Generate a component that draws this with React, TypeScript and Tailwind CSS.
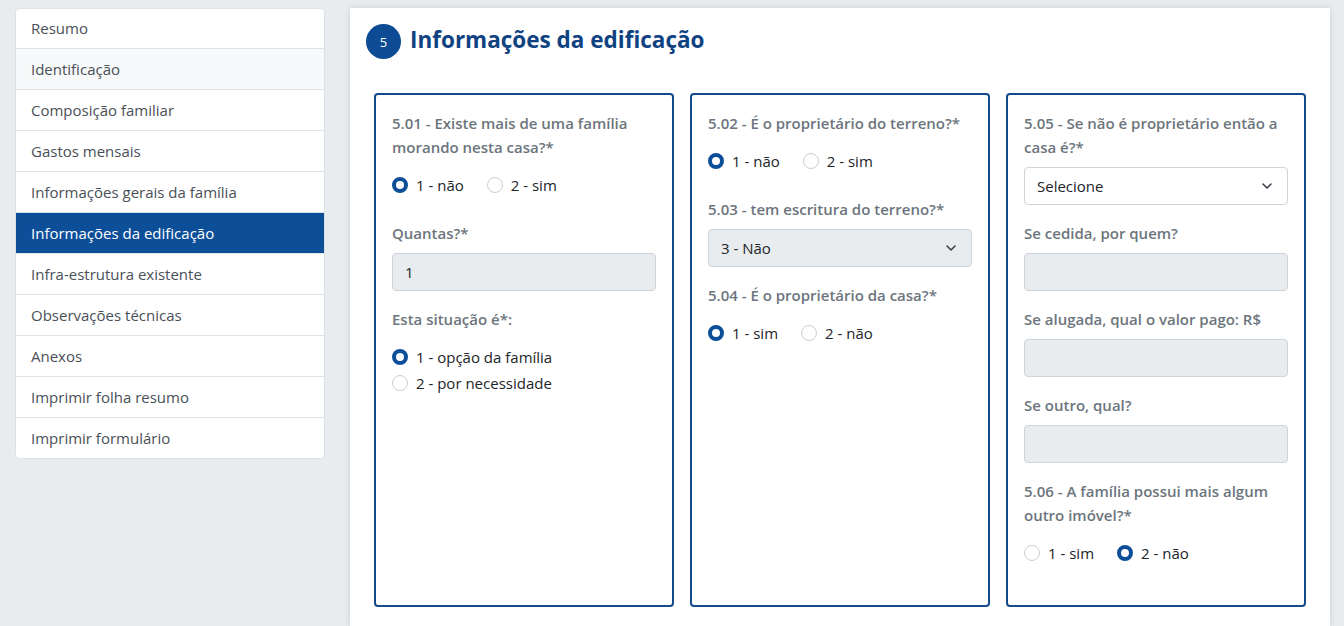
import { ChevronDown } from 'lucide-react';

const menu = [
  'Resumo',
  'Identificação',
  'Composição familiar',
  'Gastos mensais',
  'Informações gerais da família',
  'Informações da edificação',
  'Infra-estrutura existente',
  'Observações técnicas',
  'Anexos',
  'Imprimir folha resumo',
  'Imprimir formulário',
];

function Radio({ label, checked }: { label: string; checked?: boolean }) {
  return (
    <label className="mr-[23px] flex h-6 items-center">
      {checked ? (
        <span className="h-4 w-4 rounded-full border-[4.5px] border-[#0d4e99] bg-white" />
      ) : (
        <span className="h-4 w-4 rounded-full border border-[#c9cdd2] bg-white" />
      )}
      <span className="ml-2 text-[#212529]">{label}</span>
    </label>
  );
}

function Question({ children }: { children: React.ReactNode }) {
  return <div className="font-semibold text-[#6c757d]">{children}</div>;
}

function Field({ value, white }: { value?: string; white?: boolean }) {
  return (
    <div
      className={`mt-2 h-[38px] rounded border border-[#ced4da] px-3 leading-[36px] text-[#212529] ${
        white ? 'bg-white' : 'bg-[#e9ecef]'
      }`}
    >
      {value}
    </div>
  );
}

function Select({ value, white }: { value: string; white?: boolean }) {
  return (
    <div
      className={`mt-2 flex h-[38px] items-center justify-between rounded border border-[#ced4da] pl-3 pr-3 text-[#212529] ${
        white ? 'bg-white' : 'bg-[#e9ecef]'
      }`}
    >
      <span>{value}</span>
      <ChevronDown size={16} strokeWidth={2.2} className="text-[#343a40]" />
    </div>
  );
}

export default function App() {
  return (
    <div
      className="flex min-h-screen gap-[25px] bg-[#e9ecef] pl-[15px] pt-2 text-[15px] leading-6"
      style={{ fontFamily: '"Open Sans", "Noto Sans", sans-serif' }}
    >
      {/* Menu lateral */}
      <div className="h-fit w-[310px] shrink-0 overflow-hidden rounded border border-[#dee2e6] bg-white">
        {menu.map((item, i) => (
          <div
            key={item}
            className={`px-[15px] ${
              i > 0 ? 'h-[41px] border-t border-[#dee2e6] leading-[40px]' : 'h-[39px] leading-[39px]'
            } ${
              i === 5
                ? 'border-[#0d4e99] bg-[#0d4e99] text-white'
                : i === 1
                ? 'bg-[#f8f9fa] text-[#495057]'
                : 'text-[#495057]'
            }`}
          >
            {item}
          </div>
        ))}
      </div>

      {/* Conteúdo */}
      <div className="w-[980px] bg-white shadow-[0_0_6px_rgba(0,0,0,0.12)]">
        <div className="flex items-center px-4 pt-4">
          <div className="flex h-[35px] w-[35px] items-center justify-center rounded-full bg-[#0d4b94] text-[13px] text-white">
            5
          </div>
          <h1 className="-mt-[3px] ml-[9px] text-[22.5px] font-bold text-[#0f4281]">Informações da edificação</h1>
        </div>

        <div className="mt-[34px] grid grid-cols-3 gap-4 px-6">
          <div className="rounded border-2 border-[#134a8c] px-4 pt-4">
            <Question>5.01 - Existe mais de uma família morando nesta casa?*</Question>
            <div className="mb-6 mt-[14px] flex">
              <Radio label="1 - não" checked />
              <Radio label="2 - sim" />
            </div>
            <Question>Quantas?*</Question>
            <Field value="1" />
            <div className="mt-4">
              <Question>Esta situação é*:</Question>
            </div>
            <div className="mb-6 mt-[14px] flex flex-col gap-[2px]">
              <Radio label="1 - opção da família" checked />
              <Radio label="2 - por necessidade" />
            </div>
          </div>

          <div className="rounded border-2 border-[#134a8c] px-4 pt-4">
            <Question>5.02 - É o proprietário do terreno?*</Question>
            <div className="mb-6 mt-[14px] flex">
              <Radio label="1 - não" checked />
              <Radio label="2 - sim" />
            </div>
            <Question>5.03 - tem escritura do terreno?*</Question>
            <Select value="3 - Não" />
            <div className="mt-4">
              <Question>5.04 - É o proprietário da casa?*</Question>
            </div>
            <div className="mb-6 mt-[14px] flex">
              <Radio label="1 - sim" checked />
              <Radio label="2 - não" />
            </div>
          </div>

          <div className="rounded border-2 border-[#134a8c] px-4 pb-4 pt-4">
            <Question>5.05 - Se não é proprietário então a casa é?*</Question>
            <Select value="Selecione" white />
            <div className="mt-4">
              <Question>Se cedida, por quem?</Question>
            </div>
            <Field />
            <div className="mt-4">
              <Question>Se alugada, qual o valor pago: R$</Question>
            </div>
            <Field />
            <div className="mt-4">
              <Question>Se outro, qual?</Question>
            </div>
            <Field />
            <div className="mt-4">
              <Question>5.06 - A família possui mais algum outro imóvel?*</Question>
            </div>
            <div className="mb-6 mt-[14px] flex">
              <Radio label="1 - sim" />
              <Radio label="2 - não" checked />
            </div>
          </div>
        </div>
      </div>
    </div>
  );
}
